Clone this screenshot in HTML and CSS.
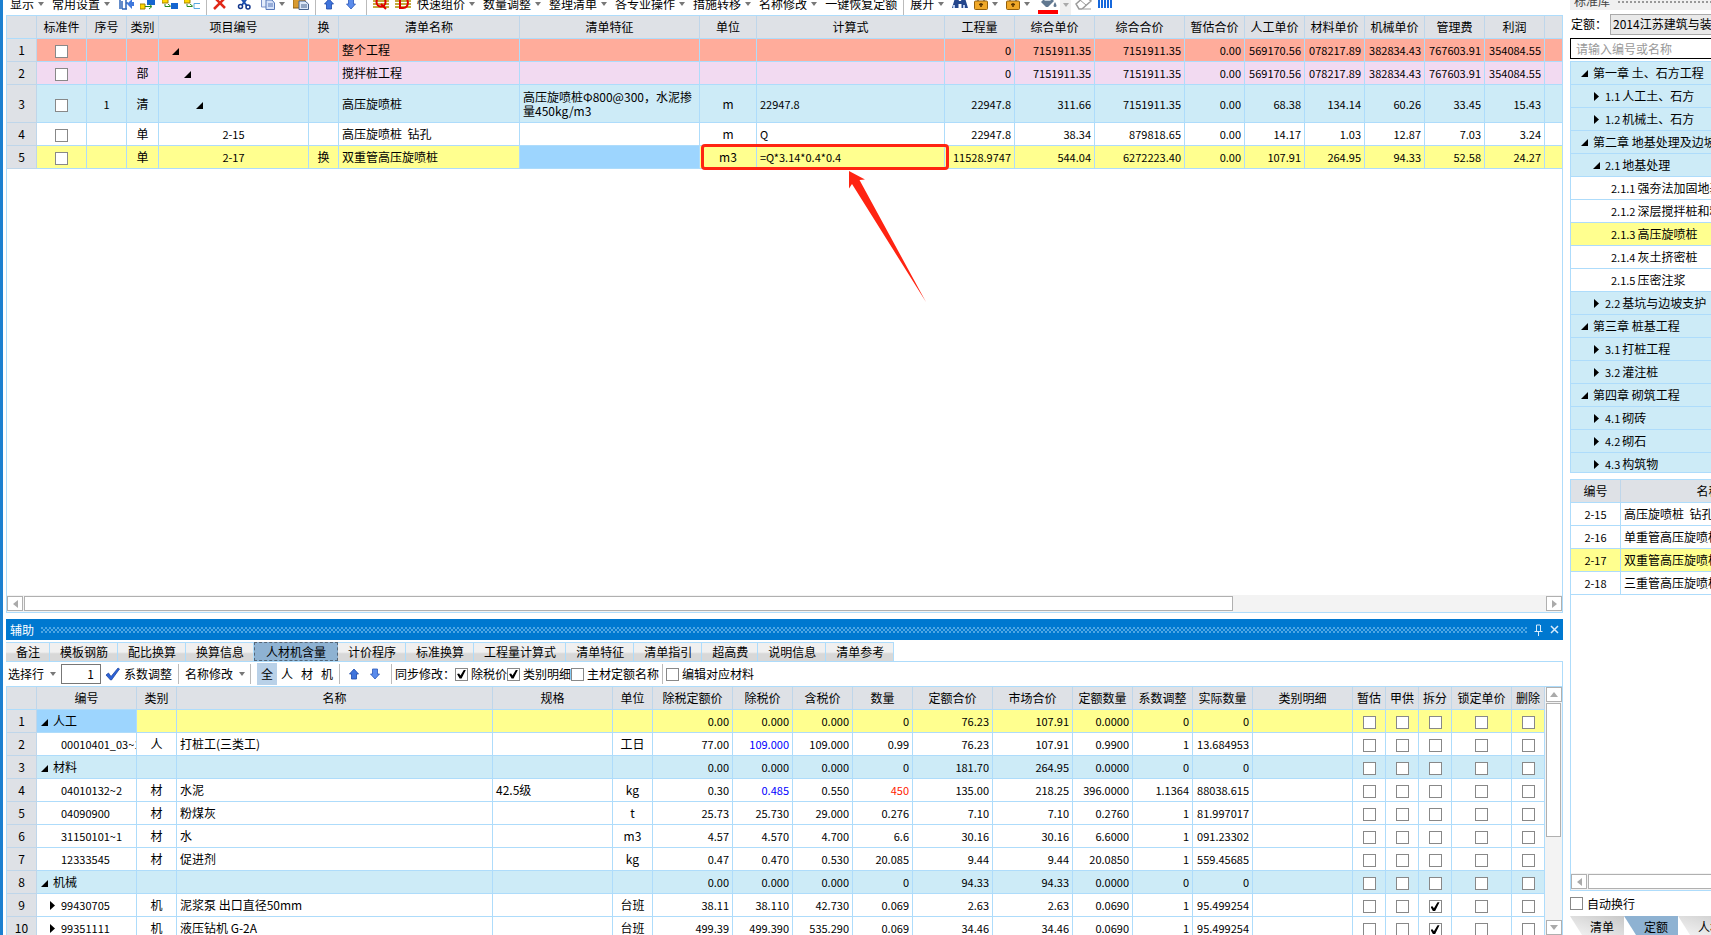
FILE: index.html
```html
<!DOCTYPE html>
<html lang="zh-CN">
<head>
    <meta charset="UTF-8">
    <meta name="viewport" content="width=device-width, initial-scale=1.0">
    <title>工程计价</title>
    <link rel="stylesheet" href="styles.css">
</head>
<body>
    <svg class="symbols" aria-hidden="true">
        <symbol id="open" viewBox="0 0 7 7"><path d="M7 0V7H0Z"/></symbol>
        <symbol id="closed" viewBox="0 0 7 9"><path d="M1 0L6 4.500L1 9Z"/></symbol>
        <symbol id="up" viewBox="0 0 10 12"><path d="M5 1L9.500 6H7.500V11H2.500V6H0.500Z" fill="#3f74dc" stroke="#1c48a8" stroke-width=".8"/></symbol>
        <symbol id="down" viewBox="0 0 10 12"><path d="M5 11L9.500 6H7.500V1H2.500V6H0.500Z" fill="#5b8cec" stroke="#2c58b8" stroke-width=".8"/></symbol>
        <symbol id="lock" viewBox="0 0 14 16"><path d="M4 7V3a3 3 0 0 1 6 0V7" fill="none" stroke="#888" stroke-width="2"/><rect x=".5" y="5" width="13" height="8.500" rx="1" fill="#f0a828" stroke="#94600c"/><path d="M7 7V11M5 8.500H9" stroke="#5a3500" stroke-width="1.500"/></symbol>
    </svg>
    <div class="app">
        <main class="workspace">
            <div class="toolbar">
                <button class="menu">显示</button>
                <button class="menu">常用设置</button>
                <button class="icon" aria-label="定位"><svg width="16" height="16"><path d="M2 2V13M4 5V13M8 3V13M4 13H9M8 7H10" stroke="#2f66b8" fill="none" stroke-width="1.500"/><path d="M9 8L14 3V6H16V10H14V13Z" fill="#3f78dc"/></svg></button>
                <button class="icon" aria-label="插入"><svg width="16" height="16"><path d="M7 3H15V9H7Z" fill="#1565d0"/><path d="M0 8H5V13H0Z" fill="#ffd800" stroke="#a08000"/><path d="M5 10.500H11M9 8L12 10.500L9 13" stroke="#278a20" fill="none"/></svg></button>
                <button class="icon" aria-label="插入子目"><svg width="16" height="16"><path d="M0 3H6V7H0Z" fill="#ffd800" stroke="#a08000"/><path d="M3 8V10.500H8M6 8L9 10.500" stroke="#278a20" fill="none"/><path d="M9 7H16V13H9Z" fill="#1565d0"/></svg></button>
                <button class="icon" aria-label="补充子目"><svg width="16" height="16"><path d="M0 3H6V7H0Z" fill="#ffd800" stroke="#a08000"/><path d="M3 8V10.500H8M6 8L9 10.500" stroke="#278a20" fill="none"/><path d="M16 7.500H10V12.500H16" stroke="#58a8e0" fill="none"/></svg></button>
                <span class="sep"></span>
                <button class="icon wide" aria-label="删除"><svg width="14" height="16"><path d="M1 13L12 2M2 2L12 12" stroke="#e02818" stroke-width="2.500"/></svg></button>
                <button class="icon wide" aria-label="剪切"><svg width="14" height="16"><path d="M3 1L10 10M11 1L5 9" stroke="#1c50b0" stroke-width="2"/><circle cx="3.500" cy="10.500" r="2" fill="none" stroke="#15388c" stroke-width="1.500"/><circle cx="11" cy="11" r="2" fill="none" stroke="#15388c" stroke-width="1.500"/></svg></button>
                <button class="menu" aria-label="复制"><svg width="14" height="16"><path d="M.5 1H9V11H.5Z" fill="#e4ecfa" stroke="#7890c8"/><path d="M5 4H11L13.500 7V13.500H5Z" fill="#d3e0f8" stroke="#5878b8"/><path d="M7 8H12M7 10H12" stroke="#5878b8"/></svg></button>
                <button class="icon" aria-label="粘贴"><svg width="16" height="16"><path d="M0 2H12V12H0Z" fill="#d89a30" stroke="#8a5c10"/><path d="M6 5H12L15.500 8V13.500H6Z" fill="#dce8f8" stroke="#46628c"/><path d="M8 9H14M8 11H14" stroke="#46628c"/></svg></button>
                <span class="sep after-paste"></span>
                <button class="icon arrow" aria-label="上移"><svg width="10" height="12"><use href="#up"/></svg></button>
                <button class="icon wide" aria-label="下移"><svg width="10" height="12"><use href="#down"/></svg></button>
                <span class="sep"></span>
                <button class="icon" aria-label="清单"><svg width="16" height="16"><path d="M0 5H16M0 8H16M0 11H16" stroke="#b09000" stroke-width="1.500"/><circle cx="8" cy="6" r="4.500" fill="none" stroke="#e00000" stroke-width="2"/><path d="M8 8L13 13" stroke="#e00000" stroke-width="2"/></svg></button>
                <button class="icon" aria-label="定额"><svg width="16" height="16"><path d="M0 5H16M0 8H16M0 11H16" stroke="#b09000" stroke-width="1.500"/><path d="M5 1V12H8C15 12 14 1 8 1" fill="none" stroke="#e00000" stroke-width="2"/></svg></button>
                <button class="menu">快速组价</button>
                <button class="menu">数量调整</button>
                <button class="menu">整理清单</button>
                <button class="menu">各专业操作</button>
                <button class="menu">措施转移</button>
                <button class="menu">名称修改</button>
                <button class="icon">一键恢复定额</button>
                <span class="sep"></span>
                <button class="menu">展开</button>
                <button class="icon" aria-label="查找"><svg width="16" height="16"><path d="M3 2H6L7 5H9L10 2H13L16 12H9.500V8H6.500V12H0Z" fill="#24468c"/><path d="M2 9V12M12 9V12" stroke="#b8ccf0" stroke-width="2"/></svg></button>
                <button class="menu" aria-label="锁定"><svg width="14" height="16"><use href="#lock"/></svg></button>
                <button class="menu" aria-label="解锁"><svg width="14" height="16"><use href="#lock"/></svg></button>
                <button class="fill" aria-label="填充颜色"><svg width="20" height="20"><path d="M3 7L10 0L16 6L10 12H8Z" fill="#607890"/><path d="M6 6L10 2L13 6Z" fill="#c4d0da"/><path d="M17 7Q20 12 17 12Q14 12 17 7" fill="#607890"/><path d="M0 15H20V19H0Z" fill="#f00"/></svg><span class="fill-drop"></span></button>
                <button class="icon" aria-label="清除"><svg width="17" height="16"><path d="M1 8L10 0L16 5L7 13H4Z" fill="#fff" stroke="#999" stroke-width="1.500"/><path d="M5 4L11 9M8 13H16" stroke="#999"/></svg></button>
                <button class="icon" aria-label="列设置"><svg width="15" height="16"><path d="M1 0V12M4 0V12M7 0V12M10 0V12M13 0V12" stroke="#1668dc" stroke-width="2"/></svg></button>
            </div>

            <section class="grid-panel">
                <table class="grid" id="bill">
                    <colgroup></colgroup>
                    <thead><tr></tr></thead>
                    <tbody></tbody>
                </table>
                <div class="hscroll">
                    <button aria-label="向左滚动"><svg width="5" height="8"><path d="M5 0V8L0 4Z"/></svg></button>
                    <span class="thumb"></span>
                    <button class="end" aria-label="向右滚动"><svg width="5" height="8"><path d="M0 0V8L5 4Z"/></svg></button>
                </div>
                <div class="mark-box"></div>
                <svg class="mark-arrow" width="80" height="134"><path d="M1 1L17 9.500L11.500 10L78 132L4 14L1 18.500Z" fill="#ff2412"/></svg>
            </section>

            <section class="aux">
                <header class="aux-title">
                    <span>辅助</span>
                    <span class="grip"></span>
                    <button aria-label="固定"><svg width="9" height="12"><path d="M2.500 1V7M6.500 1V7M2.500 1H6M.500 7.500H8.500M4.500 7V12" fill="none" stroke="#d8ecfc"/></svg></button>
                    <button aria-label="关闭"><svg width="9" height="9"><path d="M1 1L8 8M8 1L1 8" stroke="#d8ecfc" stroke-width="1.500"/></svg></button>
                </header>
                <nav class="tabs">
                    <button>备注</button><button>模板钢筋</button><button>配比换算</button><button>换算信息</button><button class="active">人材机含量</button><button>计价程序</button><button>标准换算</button><button>工程量计算式</button><button>清单特征</button><button>清单指引</button><button>超高费</button><button>说明信息</button><button>清单参考</button>
                </nav>
                <div class="aux-tools">
                    <button class="menu">选择行</button>
                    <input class="count" type="text" value="1" aria-label="行数">
                    <button class="apply"><svg width="15" height="14"><path d="M1 8L3.500 6L6 9.500L13 1L14.500 2L6.500 13H5.500Z" fill="#2b62d8" stroke="#163c98" stroke-width=".7"/></svg>系数调整</button>
                    <span class="sep"></span>
                    <button class="menu">名称修改</button>
                    <span class="sep"></span>
                    <button class="kind active">全</button><button class="kind">人</button><button class="kind">材</button><button class="kind">机</button>
                    <span class="sep"></span>
                    <button class="move" aria-label="上移"><svg width="10" height="12"><use href="#up"/></svg></button>
                    <button class="move" aria-label="下移"><svg width="10" height="12"><use href="#down"/></svg></button>
                    <span class="sep"></span>
                    <span>同步修改：</span>
                    <label><input type="checkbox" checked>除税价</label>
                    <label><input type="checkbox" checked>类别明细</label>
                    <label><input type="checkbox">主材定额名称</label>
                    <span class="sep tight"></span>
                    <label><input type="checkbox">编辑对应材料</label>
                </div>
                <div class="aux-body">
                    <div class="aux-grid">
                        <table class="grid" id="resources">
                            <colgroup></colgroup>
                            <thead><tr></tr></thead>
                            <tbody></tbody>
                        </table>
                    </div>
                    <div class="vscroll">
                        <button aria-label="向上滚动"><svg width="8" height="5"><path d="M0 5H8L4 0Z"/></svg></button>
                        <span class="thumb"></span>
                        <button class="end" aria-label="向下滚动"><svg width="8" height="5"><path d="M0 0H8L4 5Z"/></svg></button>
                    </div>
                </div>
            </section>
        </main>

        <aside class="library">
            <div class="library-inner">
                <header class="library-title"><span>标准库</span><span class="dots"></span></header>
                <div class="quota">
                    <label for="quota">定额：</label>
                    <select id="quota"><option>2014江苏建筑与装饰工程</option></select>
                </div>
                <input class="search" type="text" placeholder="请输入编号或名称" aria-label="编号或名称">
                <ul class="tree" id="tree"></ul>
                <div class="quota-list">
                    <table class="grid" id="items">
                        <colgroup><col class="w50"><col></colgroup>
                        <thead><tr><th>编号</th><th>名称</th></tr></thead>
                        <tbody>
                            <tr><td class="c num">2-15</td><td>高压旋喷桩&nbsp; 钻孔</td></tr>
                            <tr><td class="c num">2-16</td><td>单重管高压旋喷桩</td></tr>
                            <tr class="yellow"><td class="c num">2-17</td><td>双重管高压旋喷桩</td></tr>
                            <tr><td class="c num">2-18</td><td>三重管高压旋喷桩</td></tr>
                        </tbody>
                    </table>
                    <div class="hscroll">
                        <button aria-label="向左滚动"><svg width="5" height="8"><path d="M5 0V8L0 4Z"/></svg></button>
                        <span class="thumb"></span>
                    </div>
                </div>
                <label class="wrap-line"><input type="checkbox">自动换行</label>
                <nav class="library-tabs"><button>清单</button><button class="active">定额</button><button>人材机</button></nav>
            </div>
        </aside>
    </div>
    <script>
        // column: [title, width, cell class]; a width of 0 takes what is left
        const billColumns = [
            ['', 30, 'no'], ['标准件', 50, 'c'], ['序号', 40, 'c num'], ['类别', 32, 'c'],
            ['项目编号', 150, 'c num'], ['换', 30, 'c'], ['清单名称', 181, ''], ['清单特征', 180, 'wrap'],
            ['单位', 57, 'c'], ['计算式', 188, 'num'], ['工程量', 70, 'r'], ['综合单价', 80, 'r'],
            ['综合合价', 90, 'r'], ['暂估合价', 60, 'r'], ['人工单价', 60, 'r'], ['材料单价', 60, 'r'],
            ['机械单价', 60, 'r'], ['管理费', 60, 'r'], ['利润', 60, 'r'], ['', 0, '']
        ];
        const billRows = [
            ['red', '1', '', '', '', 'open:1', '', '整个工程', '', '', '', '0', '7151911.35', '7151911.35', '0.00', '569170.56', '078217.89', '382834.43', '767603.91', '354084.55', ''],
            ['purple', '2', '', '', '部', 'open:2', '', '搅拌桩工程', '', '', '', '0', '7151911.35', '7151911.35', '0.00', '569170.56', '078217.89', '382834.43', '767603.91', '354084.55', ''],
            ['blue tall', '3', '', '1', '清', 'open:3', '', '高压旋喷桩', '高压旋喷桩Φ800@300，水泥掺量450kg/m3', 'm', '22947.8', '22947.8', '311.66', '7151911.35', '0.00', '68.38', '134.14', '60.26', '33.45', '15.43', ''],
            ['', '4', '', '', '单', '2-15', '', '高压旋喷桩&nbsp; 钻孔', '', 'm', 'Q', '22947.8', '38.34', '879818.65', '0.00', '14.17', '1.03', '12.87', '7.03', '3.24', ''],
            ['yellow', '5', '', '', '单', '2-17', '换', '双重管高压旋喷桩', '', 'm3', '=Q*3.14*0.4*0.4', '11528.9747', '544.04', '6272223.40', '0.00', '107.91', '264.95', '94.33', '52.58', '24.27', '']
        ];
        const resourceColumns = [
            ['', 30, 'no'], ['编号', 100, ''], ['类别', 40, 'c'], ['名称', 0, ''], ['规格', 120, ''],
            ['单位', 40, 'c'], ['除税定额价', 80, 'r'], ['除税价', 60, 'r'], ['含税价', 60, 'r'], ['数量', 60, 'r'],
            ['定额合价', 80, 'r'], ['市场合价', 80, 'r'], ['定额数量', 60, 'r'], ['系数调整', 60, 'r'],
            ['实际数量', 60, 'r'], ['类别明细', 100, ''], ['暂估', 33, 'c'], ['甲供', 33, 'c'],
            ['拆分', 33, 'c'], ['锁定单价', 60, 'c'], ['删除', 33, 'c']
        ];
        const resourceRows = [
            ['yellow', '人工', '', '', '', '', '0.00', '0.000', '0.000', '0', '76.23', '107.91', '0.0000', '0', '0'],
            ['', '00010401_03~1', '人', '打桩工(三类工)', '', '工日', '77.00', '109.000', '109.000', '0.99', '76.23', '107.91', '0.9900', '1', '13.684953'],
            ['blue', '材料', '', '', '', '', '0.00', '0.000', '0.000', '0', '181.70', '264.95', '0.0000', '0', '0'],
            ['', '04010132~2', '材', '水泥', '42.5级', 'kg', '0.30', '0.485', '0.550', '450', '135.00', '218.25', '396.0000', '1.1364', '88038.615'],
            ['', '04090900', '材', '粉煤灰', '', 't', '25.73', '25.730', '29.000', '0.276', '7.10', '7.10', '0.2760', '1', '81.997017'],
            ['', '31150101~1', '材', '水', '', 'm3', '4.57', '4.570', '4.700', '6.6', '30.16', '30.16', '6.6000', '1', '091.23302'],
            ['', '12333545', '材', '促进剂', '', 'kg', '0.47', '0.470', '0.530', '20.085', '9.44', '9.44', '20.0850', '1', '559.45685'],
            ['blue', '机械', '', '', '', '', '0.00', '0.000', '0.000', '0', '94.33', '94.33', '0.0000', '0', '0'],
            ['', '99430705', '机', '泥浆泵 出口直径50mm', '', '台班', '38.11', '38.110', '42.730', '0.069', '2.63', '2.63', '0.0690', '1', '95.499254'],
            ['', '99351111', '机', '液压钻机 G-2A', '', '台班', '499.39', '499.390', '535.290', '0.069', '34.46', '34.46', '0.0690', '1', '95.499254']
        ];
        // tree: [level, state, number, name]
        const treeRows = [
            [1, 'open', '', '第一章 土、石方工程'], [2, 'closed', '1.1', '人工土、石方'], [2, 'closed', '1.2', '机械土、石方'],
            [1, 'open', '', '第二章 地基处理及边坡支护工程'], [2, 'open', '2.1', '地基处理'],
            [3, '', '2.1.1', '强夯法加固地基'], [3, '', '2.1.2', '深层搅拌桩和粉喷桩'], [3, 'current', '2.1.3', '高压旋喷桩'],
            [3, '', '2.1.4', '灰土挤密桩'], [3, '', '2.1.5', '压密注浆'], [2, 'closed', '2.2', '基坑与边坡支护'],
            [1, 'open', '', '第三章 桩基工程'], [2, 'closed', '3.1', '打桩工程'], [2, 'closed', '3.2', '灌注桩'],
            [1, 'open', '', '第四章 砌筑工程'], [2, 'closed', '4.1', '砌砖'], [2, 'closed', '4.2', '砌石'], [2, 'closed', '4.3', '构筑物']
        ];
        const openIcon = '<svg class="node" width="7" height="7"><use href="#open"/></svg>';
        const closedIcon = '<svg class="node" width="7" height="9"><use href="#closed"/></svg>';

        function box(label, checked) {
            return `<input type="checkbox" aria-label="${label}"${checked ? ' checked' : ''}>`;
        }
        function buildHead(table, columns) {
            table.querySelector('colgroup').innerHTML = columns.map(c => c[1] ? `<col style="width:${c[1]}px">` : '<col>').join('');
            table.querySelector('thead tr').innerHTML = columns.map(c => `<th>${c[0]}</th>`).join('');
        }
        function buildBill() {
            const table = document.getElementById('bill');
            buildHead(table, billColumns);
            table.querySelector('tbody').innerHTML = billRows.map(row => {
                const cells = row.slice(1).map((text, i) => {
                    let cls = billColumns[i][2];
                    if (i === 1) text = box('标准件');
                    if (text.startsWith('open:')) {
                        cls = 'level-' + text.slice(5);
                        text = openIcon;
                    }
                    if (i === 7 && row[0] === 'yellow') cls += ' selected';
                    return `<td class="${cls}">${text}</td>`;
                });
                return `<tr class="${row[0]}">${cells.join('')}</tr>`;
            }).join('');
        }
        function buildResources() {
            const table = document.getElementById('resources');
            buildHead(table, resourceColumns);
            table.querySelector('tbody').innerHTML = resourceRows.map((row, n) => {
                const values = [String(n + 1), ...row.slice(1), ''];
                const cells = resourceColumns.map((column, i) => {
                    let cls = column[2];
                    let text = values[i];
                    if (i === 1 && row[0]) {
                        cls = 'group' + (n === 0 ? ' selected' : '');
                        text = openIcon + text;
                    } else if (i === 1) {
                        cls = 'code num' + (n > 7 ? ' parent' : '');
                        text = (n > 7 ? closedIcon : '') + text;
                    }
                    if (i === 7 && (n === 1 || n === 3)) cls += ' changed';
                    if (i === 9 && n === 3) cls += ' warn';
                    if (i > 15) text = box(column[0], i === 18 && n > 7);
                    return `<td class="${cls}">${text}</td>`;
                });
                return `<tr class="${row[0]}">${cells.join('')}</tr>`;
            }).join('');
        }
        function buildTree() {
            document.getElementById('tree').innerHTML = treeRows.map(([level, state, number, name]) => {
                const icon = state === 'open' ? openIcon : state === 'closed' ? closedIcon : '';
                const num = number ? `<span class="num">${number}</span>` : '';
                return `<li class="depth-${level} ${state}">${icon}${num}<span>${name}</span></li>`;
            }).join('');
        }
        buildBill();
        buildResources();
        buildTree();
    </script>
</body>
</html>
```

FILE: styles.css
```css
*, *::before, *::after {
    box-sizing: border-box;
}
body {
    margin: 0;
    background: #fff;
    color: #000;
    font-family: "Noto Sans CJK SC", "Noto Sans", sans-serif;
    font-size: 12px;
    line-height: 22px;
    overflow: hidden;
}
button, input, select {
    font: inherit;
    color: inherit;
}
button {
    border: 0;
    padding: 0;
    background: none;
    white-space: nowrap;
}
svg {
    display: block;
    flex: none;
}
.symbols {
    position: absolute;
    width: 0;
    height: 0;
}
.app {
    display: flex;
    height: 100vh;
    border-left: 3px solid #1c80d0;
    padding-left: 3px;
}
.workspace {
    flex: 1;
    min-width: 0;
    display: flex;
    flex-direction: column;
}

/* check boxes */
input[type=checkbox] {
    appearance: none;
    flex: none;
    width: 13px;
    height: 13px;
    margin: 0;
    border: 1px solid #888;
    background: #fff;
    vertical-align: middle;
    display: inline-grid;
    place-items: center;
}
input[type=checkbox]:checked::after {
    content: "";
    width: 9px;
    height: 9px;
    background: #000;
    clip-path: polygon(0 50%, 22% 45%, 38% 68%, 78% 0, 100% 0, 50% 100%, 28% 100%);
}

/* top toolbar */
.toolbar {
    height: 15px;
    display: flex;
    align-items: flex-end;
    padding-left: 4px;
    overflow: hidden;
}
.toolbar button {
    height: 23px;
    display: flex;
    align-items: center;
    flex: none;
}
.menu {
    display: flex;
    align-items: center;
}
.menu::after {
    content: "";
    width: 6px;
    margin: 0 8px 0 4px;
    border: 3px solid transparent;
    border-top: 4px solid #777;
    border-bottom: 0;
}
.toolbar .icon {
    margin-right: 6px;
}
.toolbar .wide {
    margin-right: 10px;
}
.toolbar .arrow {
    margin-right: 12px;
}
.sep {
    width: 1px;
    height: 20px;
    margin-right: 6px;
    background: #bbb;
    flex: none;
}
.toolbar .after-paste {
    margin-right: 8px;
}
.toolbar .fill {
    align-items: flex-end;
    margin-right: 4px;
}
.fill-drop {
    width: 11px;
    height: 20px;
    margin-left: 2px;
    background: #f0f0f0;
    display: grid;
    place-items: center;
}
.fill-drop::after {
    content: "";
    border: 3px solid transparent;
    border-top: 4px solid #aaa;
    border-bottom: 0;
}

/* tables */
.grid {
    width: 100%;
    table-layout: fixed;
    border-collapse: separate;
    border-spacing: 0;
}
.grid th, .grid td {
    height: 23px;
    padding: 0 3px;
    border-right: 1px solid #aedcfb;
    border-bottom: 1px solid #aedcfb;
    overflow: hidden;
    white-space: nowrap;
    text-align: left;
}
.grid th {
    background: #dee1e6;
    border-right-color: #bfd6ea;
    font-weight: normal;
    text-align: center;
    padding: 0;
}
.grid .no {
    background: #dee1e6;
    border-color: #bfd6ea;
    text-align: center;
}
.grid .c {
    text-align: center;
}
.grid .r {
    text-align: right;
    font-size: 11px;
}
.num {
    font-size: 11px;
}
.grid .wrap {
    white-space: normal;
    line-height: 14px;
}
.tall td {
    height: 38px;
}
.red {
    background: #ffac9b;
}
.purple {
    background: #f2daf1;
}
.blue {
    background: #cdebf7;
}
.yellow {
    background: #ffff8f;
}
.grid .selected {
    background: #9dd5fe;
}
.grid .changed {
    color: #00f;
}
.grid .warn {
    color: #f20;
}
.node {
    display: inline-block;
    flex: none;
}
.grid .level-1 {
    padding-left: 13px;
}
.grid .level-2 {
    padding-left: 25px;
}
.grid .level-3 {
    padding-left: 37px;
}
.grid .group {
    padding-left: 4px;
}
.group .node, .parent .node {
    margin-right: 5px;
}
.grid .code {
    padding-left: 24px;
}
.grid .parent {
    padding-left: 12px;
}

/* main grid */
.grid-panel {
    position: relative;
    flex: 1;
    min-height: 0;
    display: flex;
    flex-direction: column;
    justify-content: space-between;
    border: 1px solid #aedcfb;
    margin-bottom: 6px;
}
#bill th:last-child, #bill td:last-child {
    border-right: 0;
}
.mark-box {
    position: absolute;
    left: 694px;
    top: 128px;
    width: 248px;
    height: 26px;
    border: 3px solid #ff2412;
    border-radius: 4px;
}
.mark-arrow {
    position: absolute;
    left: 841px;
    top: 154px;
}
.hscroll {
    display: flex;
    height: 17px;
    gap: 1px;
    padding: 1px 0;
    background: #f3f3f3;
}
.hscroll button, .vscroll button {
    width: 16px;
    height: 15px;
    flex: none;
    display: grid;
    place-items: center;
    border: 1px solid #b0b0b0;
    background: #fff;
}
.hscroll path, .vscroll path {
    fill: #aaa;
}
.hscroll .thumb {
    flex: 0 1 1209px;
    border: 1px solid #b0b0b0;
    background: #fff;
}
.hscroll .end {
    margin-left: auto;
}

/* lower panel */
.aux {
    flex: 0 0 316px;
    display: flex;
    flex-direction: column;
    min-height: 0;
}
.aux-title {
    height: 21px;
    flex: none;
    display: flex;
    align-items: center;
    gap: 7px;
    padding: 0 4px;
    background: #0078d0;
    color: #fff;
}
.grip {
    flex: 1;
    height: 6px;
    background-image: radial-gradient(circle at 1px 1px, #4fa6e4 1px, transparent 1px), radial-gradient(circle at 3px 3px, #4fa6e4 1px, transparent 1px);
    background-size: 4px 4px;
}
.tabs {
    display: flex;
    flex: none;
    height: 21px;
    padding-top: 1px;
    margin-top: 1px;
    border-bottom: 1px solid #aedcfb;
}
.tabs button {
    padding: 0 9px 0 10px;
    border-top: 1px solid #aedcfb;
    border-right: 1px solid #aedcfb;
    background: linear-gradient(#f0f0f0 50%, #d8d8d8 60%);
    line-height: 18px;
}
.tabs .active {
    padding: 0 11px;
    border: 1px dashed #567;
    background: #8eb2d2;
}
.aux-tools {
    display: flex;
    align-items: center;
    flex: none;
    height: 24px;
    padding-left: 2px;
    white-space: nowrap;
    border-right: 1px solid #aedcfb;
}
.aux-tools .menu::after {
    margin: 0 5px 0 6px;
}
.count {
    width: 40px;
    height: 20px;
    border: 1px solid #777;
    padding: 0 6px;
    text-align: right;
    margin-right: 4px;
}
.apply {
    display: flex;
    align-items: center;
    gap: 4px;
    margin-right: 6px;
}
.kind {
    width: 20px;
    height: 22px;
}
.kind.active {
    background: #b9d1e8;
}
.kind + .sep {
    margin: 0 9px 0 2px;
}
.move {
    margin-right: 11px;
}
.move + .sep {
    margin: 0 3px 0 0;
}
.aux-tools label {
    display: flex;
    align-items: center;
    gap: 3px;
}
.aux-tools .tight {
    margin: 0 3px;
}
.aux-body {
    flex: 1;
    min-height: 0;
    display: flex;
    border: 1px solid #aedcfb;
    border-bottom: 0;
}
.aux-grid {
    flex: 1;
    min-width: 0;
    overflow: hidden;
}
.vscroll {
    width: 17px;
    display: flex;
    flex-direction: column;
    align-items: center;
    gap: 1px;
    background: #f3f3f3;
}
.vscroll .thumb {
    width: 15px;
    height: 54%;
    border: 1px solid #b0b0b0;
    background: #fff;
}
.vscroll .end {
    margin-top: auto;
}

/* quota library */
.library {
    width: 148px;
    flex: none;
    padding-left: 7px;
    overflow: hidden;
}
.library-inner {
    width: 228px;
    height: 100%;
    display: flex;
    flex-direction: column;
}
.library-title {
    height: 10px;
    display: flex;
    align-items: flex-end;
    gap: 8px;
    padding-left: 4px;
    background: #f0f0f0;
    color: #444;
    line-height: 18px;
    overflow: hidden;
    flex: none;
}
.dots {
    flex: 1;
    height: 10px;
    background: radial-gradient(circle at 1px 2px, #999 1px, transparent 1px) 0 0 / 4px 10px repeat-x;
}
.quota {
    display: flex;
    align-items: center;
    gap: 3px;
    height: 28px;
    flex: none;
    padding-left: 1px;
    white-space: nowrap;
}
.quota select {
    flex: 1;
    height: 21px;
    appearance: none;
    border: 1px solid #aaa;
    border-radius: 0;
    padding: 0 2px;
    background: #e9e9e9;
    line-height: 18px;
}
.search {
    height: 21px;
    flex: none;
    border: 1px solid #000;
    border-radius: 0;
    padding: 0 5px;
    outline: 0;
}
.search::placeholder {
    color: #999;
}
.tree {
    list-style: none;
    margin: 2px 0 6px;
    padding: 0;
    height: 412px;
    flex: none;
    overflow: hidden;
    border: 1px solid #aedcfb;
}
.tree li {
    height: 23px;
    display: flex;
    align-items: center;
    gap: 5px;
    border-bottom: 1px solid #aedcfb;
    background: #cdebf7;
    padding-left: 10px;
    white-space: nowrap;
}
.tree .depth-2 {
    padding-left: 22px;
}
.tree .depth-3 {
    padding-left: 40px;
    background: #fff;
}
.tree .current {
    background: #ffff8f;
}
.tree .num + span {
    margin-left: -3px;
}
.quota-list {
    flex: 1;
    min-height: 0;
    display: flex;
    flex-direction: column;
    justify-content: space-between;
    border: 1px solid #aedcfb;
}
.w50 {
    width: 50px;
}
.wrap-line {
    display: flex;
    align-items: center;
    gap: 4px;
    height: 25px;
    flex: none;
}
.library-tabs {
    display: flex;
    height: 19px;
    flex: none;
    overflow: hidden;
}
.library-tabs button {
    padding: 0 10px 0 20px;
    background: linear-gradient(to bottom left, #c8c8c8, #f4f4f4);
    clip-path: polygon(0 0, 100% 0, 100% 100%, 12px 100%);
}
.library-tabs .active {
    background: #8eb2d2;
}
```
